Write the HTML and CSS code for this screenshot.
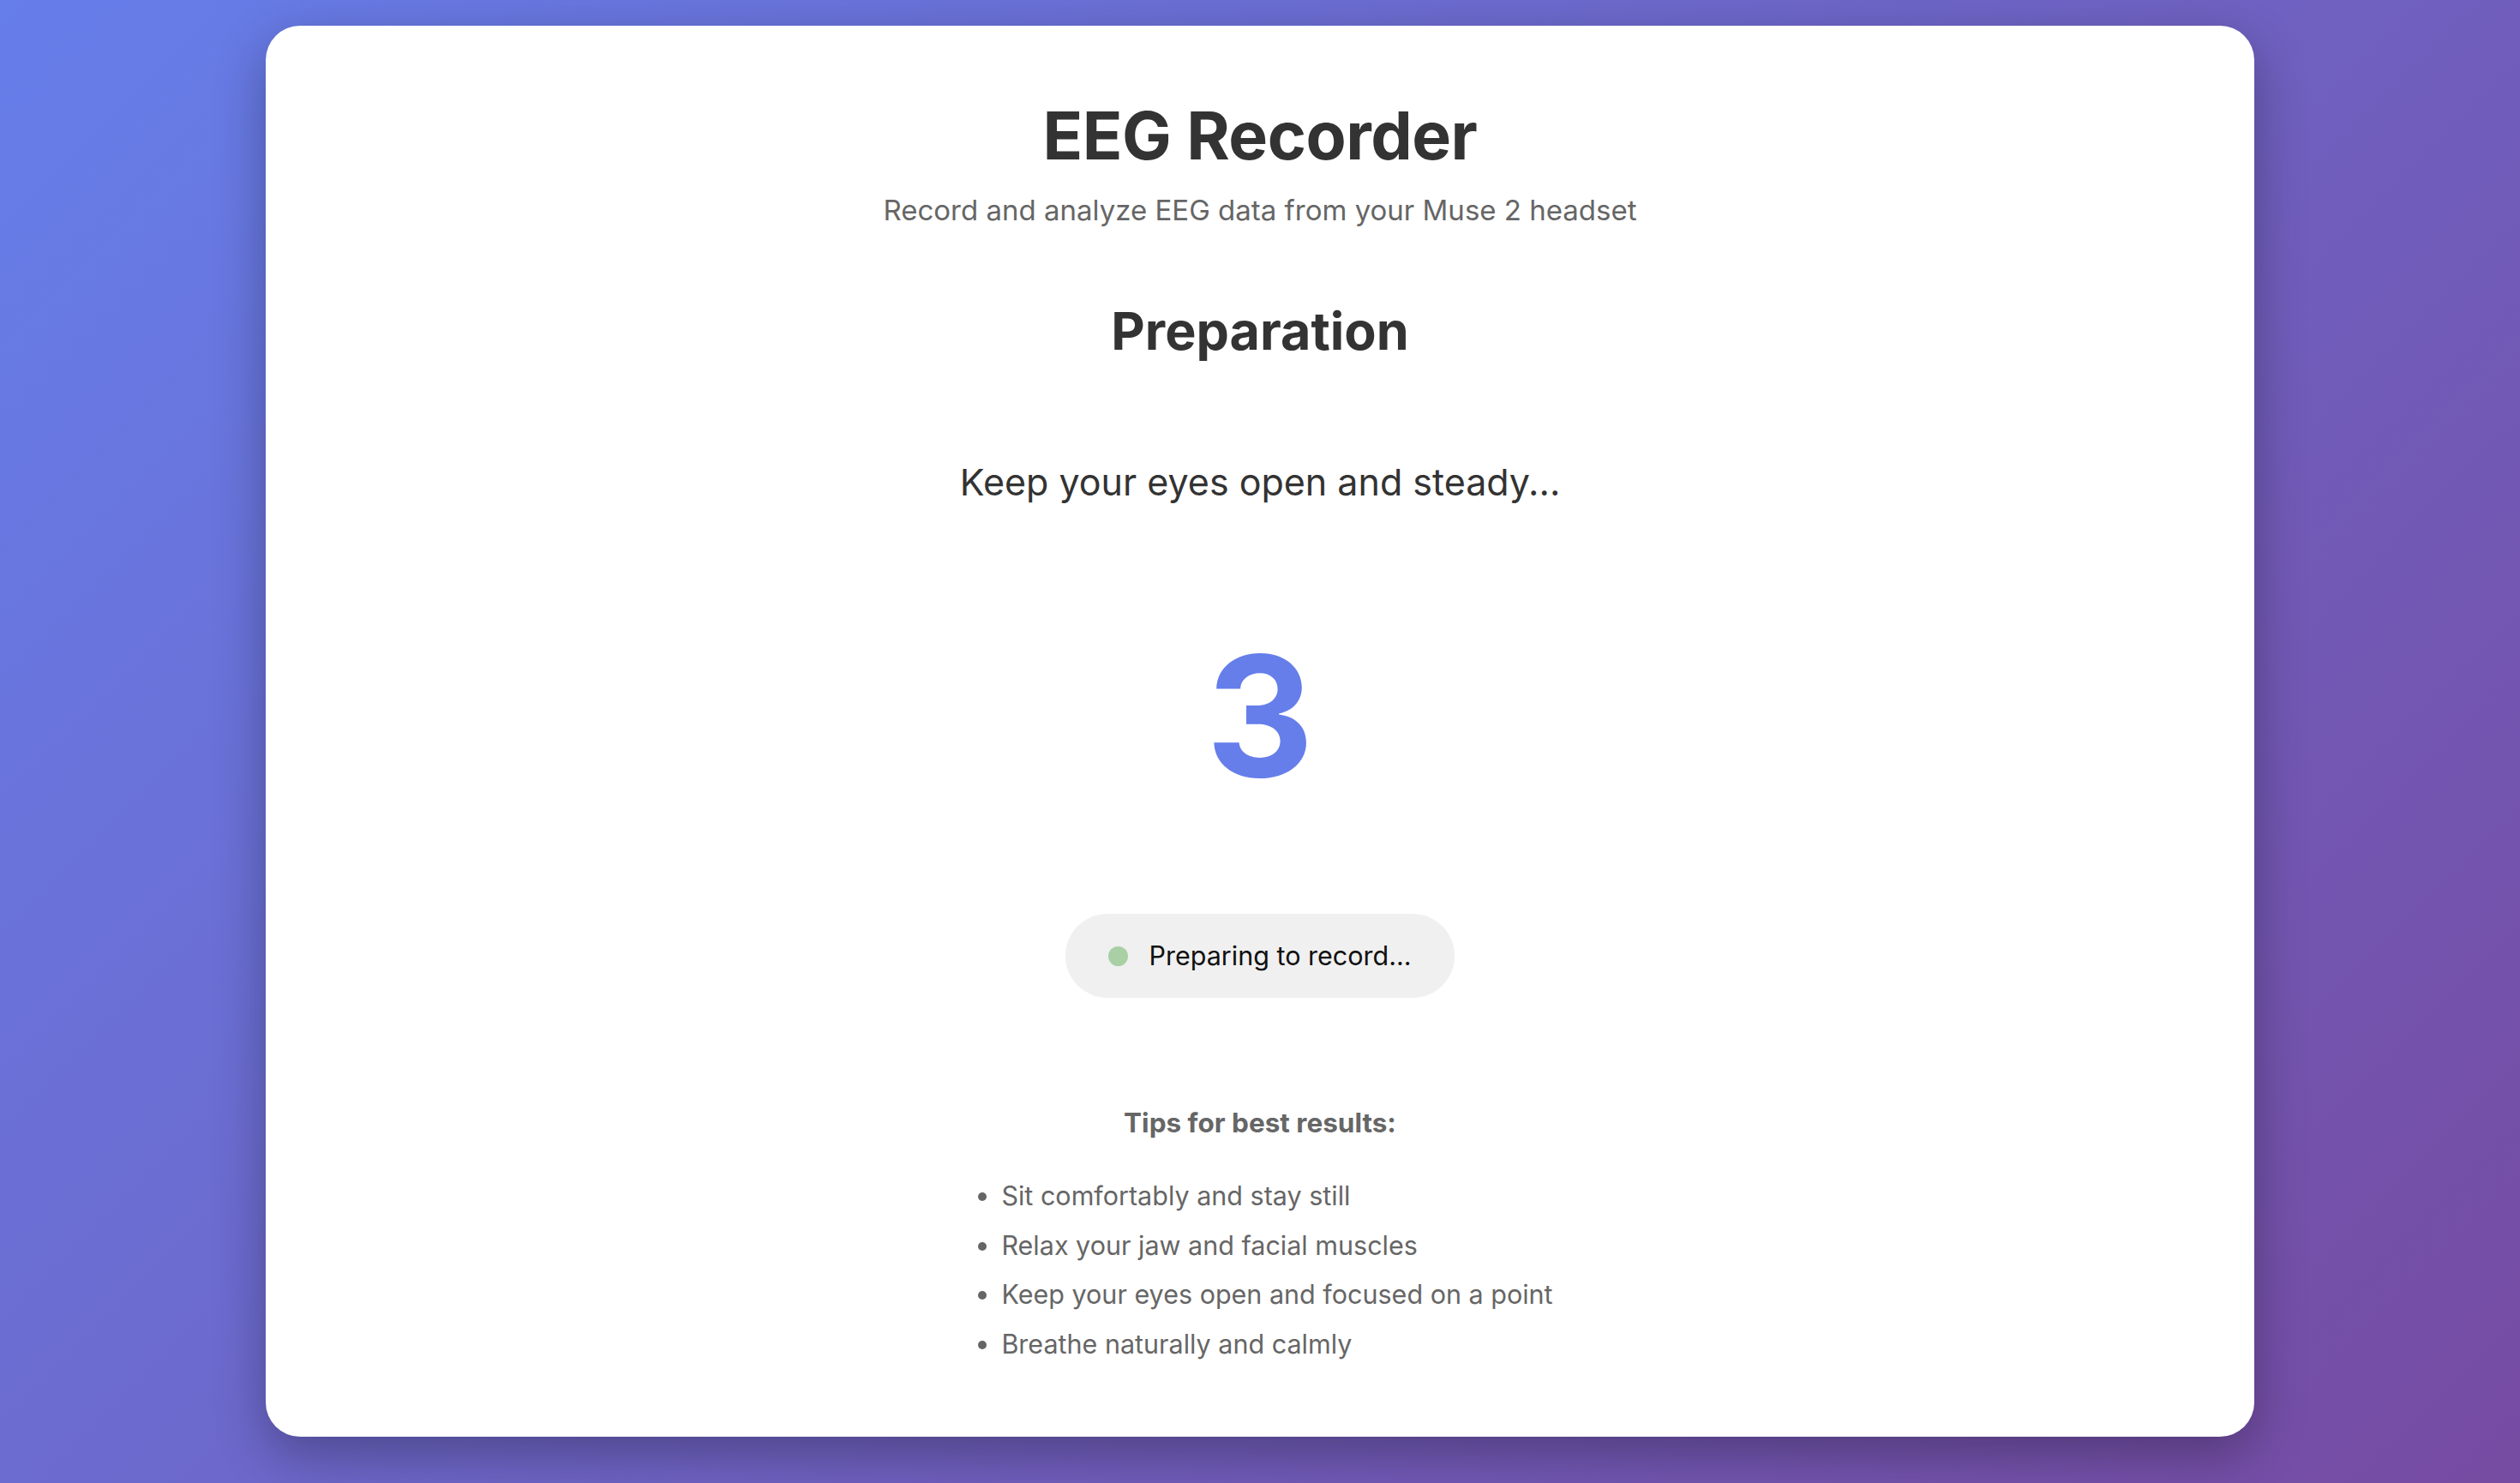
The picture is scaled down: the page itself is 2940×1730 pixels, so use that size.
FILE: index.html
```html
<!DOCTYPE html>
<html lang="en">
<head>
<meta charset="utf-8">
<title>EEG Recorder</title>
<link rel="stylesheet" href="styles.css">
</head>
<body>
  <main class="card">
    <header class="header">
      <h1 class="title">EEG Recorder</h1>
      <p class="subtitle">Record and analyze EEG data from your Muse 2 headset</p>
    </header>
    <section class="phase">
      <h2 class="phase-title">Preparation</h2>
      <p class="instruction">Keep your eyes open and steady...</p>
      <div class="countdown">3</div>
      <div class="status">
        <span class="status-dot"></span>
        <span class="status-text">Preparing to record...</span>
      </div>
    </section>
    <section class="tips">
      <h3 class="tips-title">Tips for best results:</h3>
      <ul class="tips-list">
        <li>Sit comfortably and stay still</li>
        <li>Relax your jaw and facial muscles</li>
        <li>Keep your eyes open and focused on a point</li>
        <li>Breathe naturally and calmly</li>
      </ul>
    </section>
  </main>
</body>
</html>
```

FILE: styles.css
```css
* {
  box-sizing: border-box;
}

html, body {
  margin: 0;
  height: 1730px;
}

body {
  font-family: "Inter", "Noto Sans", "Liberation Sans", sans-serif;
  background: linear-gradient(135deg, #667eea 0%, #764ba2 100%);
  padding-top: 30px;
  overflow: hidden;
}

.card {
  width: 2320px;
  margin: 0 auto;
  background: #ffffff;
  border-radius: 40px;
  box-shadow: 0 20px 60px rgba(0, 0, 0, 0.3);
  padding: 82px 80px 80px;
  text-align: center;
}

.header {
  display: flex;
  flex-direction: column;
  align-items: center;
}

.title {
  margin: 0;
  font-size: 77px;
  line-height: 92px;
  font-weight: 700;
  color: #333333;
  letter-spacing: -0.5px;
}

.subtitle {
  margin: 18px 0 0;
  font-size: 33px;
  line-height: 46px;
  color: #666666;
}

.phase {
  display: flex;
  flex-direction: column;
  align-items: center;
}

.phase-title {
  margin: 82px 0 0;
  font-size: 61px;
  line-height: 73px;
  font-weight: 700;
  color: #333333;
}

.instruction {
  margin: 113px 0 0;
  font-size: 43px;
  line-height: 52px;
  color: #333333;
}

.countdown {
  margin-top: 150px;
  font-size: 195px;
  line-height: 195px;
  font-weight: 700;
  color: #667eea;
}

.status {
  margin-top: 133px;
  height: 98px;
  padding: 0 50px;
  display: flex;
  align-items: center;
  gap: 24px;
  background: #f0f0f0;
  border-radius: 49px;
}

.status-dot {
  width: 23px;
  height: 23px;
  border-radius: 50%;
  background: #a8d0a4;
}

.status-text {
  font-size: 30.5px;
  line-height: 40px;
  color: #111111;
}

.tips {
  margin-top: 127px;
}

.tips-title {
  margin: 0;
  font-size: 31.5px;
  line-height: 38px;
  font-weight: 700;
  color: #666666;
}

.tips-list {
  display: inline-block;
  margin: 37px 0 0;
  padding-left: 40px;
  text-align: left;
  font-size: 30.5px;
  line-height: 57.6px;
  color: #666666;
}
```
